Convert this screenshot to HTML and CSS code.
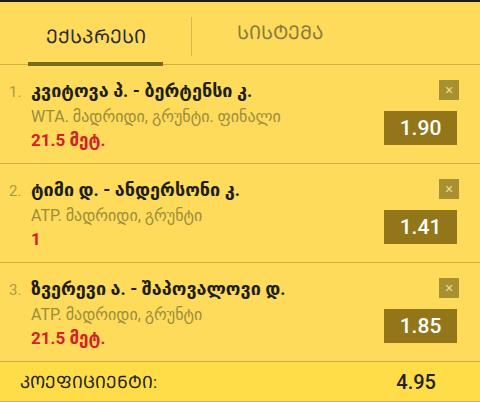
FILE: index.html
```html
<!DOCTYPE html>
<html lang="ka">

<head>
    <meta charset="UTF-8">
    <meta name="viewport" content="width=device-width, initial-scale=1.0">
    <title>ბილეთი</title>
    <link rel="stylesheet" href="styles.css">
</head>

<body>
    <div class="betslip">
        <div class="tabs">
            <div class="tab active">ᲔᲥᲡᲞᲠᲔᲡᲘ</div>
            <div class="tab">ᲡᲘᲡᲢᲔᲛᲐ</div>
        </div>

        <div class="bets">
            <div class="bet">
                <div class="bet-info">
                    <div class="bet-title"><span class="num">1.</span>კვიტოვა პ. - ბერტენსი კ.</div>
                    <div class="bet-league">WTA. მადრიდი, გრუნტი. ფინალი</div>
                    <div class="bet-pick">21.5 მეტ.</div>
                </div>
                <div class="bet-side">
                    <button class="remove">×</button>
                    <div class="odd">1.90</div>
                </div>
            </div>

            <div class="bet">
                <div class="bet-info">
                    <div class="bet-title"><span class="num">2.</span>ტიმი დ. - ანდერსონი კ.</div>
                    <div class="bet-league">ATP. მადრიდი, გრუნტი</div>
                    <div class="bet-pick">1</div>
                </div>
                <div class="bet-side">
                    <button class="remove">×</button>
                    <div class="odd">1.41</div>
                </div>
            </div>

            <div class="bet">
                <div class="bet-info">
                    <div class="bet-title"><span class="num">3.</span>ზვერევი ა. - შაპოვალოვი დ.</div>
                    <div class="bet-league">ATP. მადრიდი, გრუნტი</div>
                    <div class="bet-pick">21.5 მეტ.</div>
                </div>
                <div class="bet-side">
                    <button class="remove">×</button>
                    <div class="odd">1.85</div>
                </div>
            </div>
        </div>

        <div class="total">
            <span>ᲙᲝᲔᲤᲘᲪᲘᲔᲜᲢᲘ:</span>
            <b>4.95</b>
        </div>
    </div>
</body>

</html>
```

FILE: styles.css
```css
body {
    margin: 0;
    padding: 0;
    background-color: #fedb5a;
    font-family: Roboto, "DejaVu Sans", sans-serif;
}

.betslip {
    border-top: 2px solid #1c1c1c;
    background-color: #fedb5a;
}

.tabs {
    display: flex;
    border-bottom: 1px solid #d4b040;
    height: 62px;
}

.tab {
    position: relative;
    width: 191px;
    display: flex;
    align-items: center;
    justify-content: center;
    font-size: 19px;
    color: #8a7a40;
    padding-bottom: 2px;
}

.tab:first-child {
    border-right: 1px solid #d6b84a;
    margin: 15px 0 8px;
}

.tab.active {
    color: #2b2b3a;
}

.tab.active::after {
    content: "";
    position: absolute;
    left: 28px;
    right: 28px;
    bottom: -10px;
    height: 4px;
    background-color: #7a6a1c;
}

.tab:last-child {
    width: 176px;
}

.bet {
    display: flex;
    justify-content: space-between;
    height: 98px;
    border-bottom: 1px solid #d4b040;
}

.bet-info {
    padding: 15px 0 0 9px;
}

.bet-title {
    font-size: 18px;
    font-weight: bold;
    color: #1e1e1e;
}

.num {
    display: inline-block;
    width: 22px;
    font-weight: normal;
    font-size: 15px;
    color: #ab9a40;
}

.bet-league {
    margin: 6px 0 0 22px;
    font-size: 16px;
    color: #9c8c3c;
}

.bet-pick {
    margin: 4px 0 0 22px;
    font-size: 17px;
    font-weight: bold;
    color: #d4202a;
}

.bet-side {
    display: flex;
    flex-direction: column;
    align-items: flex-end;
    padding: 15px 23px 0 0;
}

.remove {
    width: 20px;
    height: 20px;
    padding: 0;
    border: none;
    background-color: #a89030;
    color: #f0e0a0;
    font-size: 14px;
    line-height: 20px;
    margin-right: -2px;
}

.odd {
    margin-top: 11px;
    width: 73px;
    height: 34px;
    line-height: 34px;
    text-align: center;
    background-color: #937619;
    color: #fff;
    font-weight: 500;
    font-size: 21px;
}

.total {
    display: flex;
    justify-content: space-between;
    align-items: center;
    height: 39px;
    padding: 0 44px 0 20px;
    background-color: #fedd48;
    border-bottom: 1px solid #d4b040;
    font-size: 17px;
    color: #222;
}

.total b {
    font-weight: 500;
    font-size: 20px;
}
```
